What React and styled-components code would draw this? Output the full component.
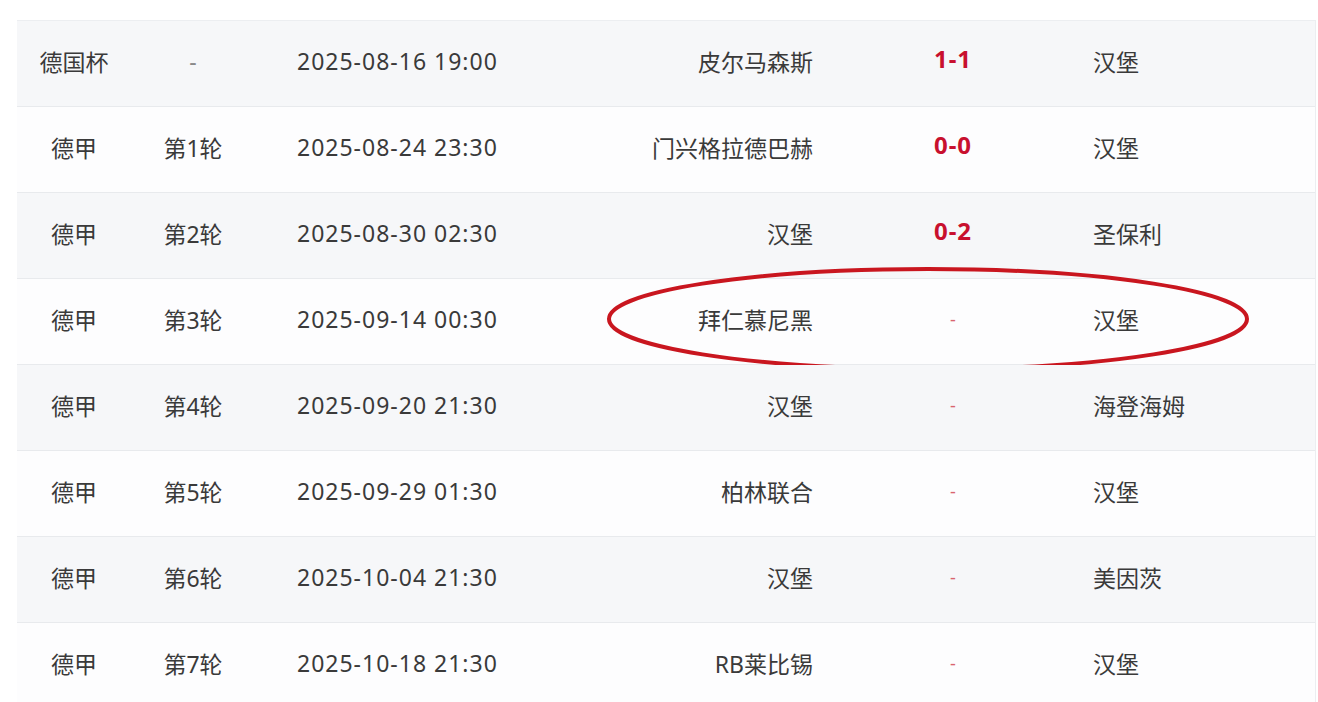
import React from "react";
import styled, { createGlobalStyle } from "styled-components";

const GlobalStyle = createGlobalStyle`
  html, body {
    margin: 0;
    padding: 0;
    background: #ffffff;
  }
  body {
    font-family: "Noto Sans", "Noto Sans CJK SC", sans-serif;
  }
`;

const matches = [
  { league: "德国杯", round: "-", time: "2025-08-16 19:00", home: "皮尔马森斯", score: "1-1", away: "汉堡" },
  { league: "德甲", round: "第1轮", time: "2025-08-24 23:30", home: "门兴格拉德巴赫", score: "0-0", away: "汉堡" },
  { league: "德甲", round: "第2轮", time: "2025-08-30 02:30", home: "汉堡", score: "0-2", away: "圣保利" },
  { league: "德甲", round: "第3轮", time: "2025-09-14 00:30", home: "拜仁慕尼黑", score: null, away: "汉堡", circled: true },
  { league: "德甲", round: "第4轮", time: "2025-09-20 21:30", home: "汉堡", score: null, away: "海登海姆" },
  { league: "德甲", round: "第5轮", time: "2025-09-29 01:30", home: "柏林联合", score: null, away: "汉堡" },
  { league: "德甲", round: "第6轮", time: "2025-10-04 21:30", home: "汉堡", score: null, away: "美因茨" },
  { league: "德甲", round: "第7轮", time: "2025-10-18 21:30", home: "RB莱比锡", score: null, away: "汉堡" },
];

const Page = styled.div`
  padding: 20px 2px 0 17px;
  height: 702px;
  box-sizing: border-box;
  overflow: hidden;
`;

const Table = styled.div`
  border-top: 1px solid #eceef1;
  border-right: 1px solid #eceef1;
`;

const Row = styled.div`
  position: relative;
  display: grid;
  grid-template-columns: 114px 124px 300px 258px 280px 1fr;
  align-items: center;
  height: 85px;
  border-bottom: 1px solid #e8eaed;
  background: ${(p) => (p.$shaded ? "#f6f7f9" : "#fdfdfe")};
  color: #3a3a3a;
  font-size: 23px;
`;

const Cell = styled.div`
  text-align: ${(p) => p.$align || "center"};
  padding-left: ${(p) => p.$padLeft || 0}px;
  margin-top: -5px;
  white-space: nowrap;
  letter-spacing: ${(p) => p.$spacing || 0}px;
  color: ${(p) => (p.$muted ? "#8a8a8a" : "inherit")};
`;

const Score = styled.div`
  text-align: center;
  font-weight: 700;
  font-size: 24px;
  letter-spacing: 1px;
  color: #c8102e;
  margin-top: -11px;
`;

const NoScore = styled.div`
  text-align: center;
  font-size: 18px;
  color: #d9646e;
  margin-top: -6px;
`;

const Circle = styled.svg`
  position: absolute;
  left: 588px;
  top: -14px;
  width: 646px;
  height: 108px;
  pointer-events: none;
  overflow: visible;
`;

const App = () => {
  return (
    <Page>
      <GlobalStyle />
      <Table>
        {matches.map((m, i) => (
          <Row key={m.time} $shaded={i % 2 === 0}>
            <Cell>{m.league}</Cell>
            <Cell $muted={m.round === "-"}>{m.round}</Cell>
            <Cell $align="left" $padLeft={42} $spacing={1}>
              {m.time}
            </Cell>
            <Cell $align="right">{m.home}</Cell>
            {m.score ? <Score>{m.score}</Score> : <NoScore>-</NoScore>}
            <Cell $align="left">{m.away}</Cell>
            {m.circled && (
              <Circle viewBox="0 0 646 108">
                <ellipse
                  cx="323"
                  cy="54"
                  rx="319"
                  ry="50"
                  fill="none"
                  stroke="#c9161f"
                  strokeWidth="4"
                />
              </Circle>
            )}
          </Row>
        ))}
      </Table>
    </Page>
  );
};

export default App;
